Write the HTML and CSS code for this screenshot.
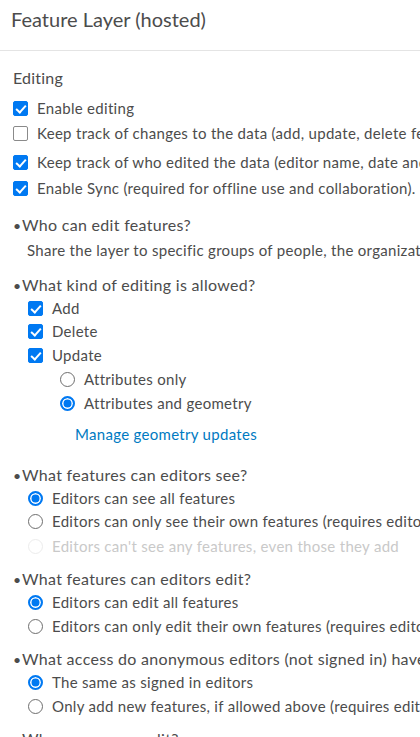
FILE: index.html
```html
<!DOCTYPE html>
<html>
<head>
<meta charset="utf-8">
<link rel="stylesheet" href="styles.css">
</head>
<body>
<div class="page">
  <header class="head">
    <h1 class="title">Feature Layer (hosted)</h1>
  </header>
  <section class="content">
    <h2 class="section">Editing</h2>
    <div class="opt row1"><span class="cb on"></span><span>Enable editing</span></div>
    <div class="opt row2"><span class="cb"></span><span>Keep track of changes to the data (add, update, delete features).</span></div>
    <div class="opt row3"><span class="cb on"></span><span>Keep track of who edited the data (editor name, date and time).</span></div>
    <div class="opt row4"><span class="cb on"></span><span>Enable Sync (required for offline use and collaboration).</span></div>

    <div class="q q1"><span class="dot">•</span>Who can edit features?</div>
    <div class="desc">Share the layer to specific groups of people, the organization, or everyone.</div>

    <div class="q q2"><span class="dot">•</span>What kind of editing is allowed?</div>
    <div class="sub">
      <div class="opt s1"><span class="cb on"></span><span>Add</span></div>
      <div class="opt s2"><span class="cb on"></span><span>Delete</span></div>
      <div class="opt s3"><span class="cb on"></span><span>Update</span></div>
      <div class="subsub">
        <div class="opt r1"><span class="rb"></span><span>Attributes only</span></div>
        <div class="opt r2"><span class="rb on"></span><span>Attributes and geometry</span></div>
        <a class="link">Manage geometry updates</a>
      </div>
    </div>

    <div class="q q3"><span class="dot">•</span>What features can editors see?</div>
    <div class="sub">
      <div class="opt s1"><span class="rb on"></span><span>Editors can see all features</span></div>
      <div class="opt s2"><span class="rb"></span><span>Editors can only see their own features (requires editor tracking)</span></div>
      <div class="opt s4 disabled"><span class="rb dis"></span><span>Editors can't see any features, even those they add</span></div>
    </div>

    <div class="q q4"><span class="dot">•</span>What features can editors edit?</div>
    <div class="sub">
      <div class="opt s1"><span class="rb on"></span><span>Editors can edit all features</span></div>
      <div class="opt s3"><span class="rb"></span><span>Editors can only edit their own features (requires editor tracking)</span></div>
    </div>

    <div class="q q5"><span class="dot">•</span>What access do anonymous editors (not signed in) have?</div>
    <div class="sub">
      <div class="opt s1"><span class="rb on"></span><span>The same as signed in editors</span></div>
      <div class="opt s3"><span class="rb"></span><span>Only add new features, if allowed above (requires editor tracking)</span></div>
    </div>

    <div class="q q6"><span class="dot">•</span>When can users edit?</div>
  </section>
</div>
</body>
</html>
```
FILE: styles.css
```css
html, body {
  margin: 0;
  padding: 0;
  background: #fff;
  overflow: hidden;
  height: 737px;
}
body {
  font-family: Lato, "Open Sans", sans-serif;
  color: #4c4c4c;
  white-space: nowrap;
}
.page {
  width: 420px;
}
.head {
  height: 51px;
  border-bottom: 1px solid #e4e4e4;
  box-sizing: border-box;
}
.title {
  margin: 0;
  padding: 7px 0 0 11px;
  font-size: 20px;
  font-weight: 400;
  line-height: 24px;
  color: #4c4c4c;
}
.content {
  padding: 16px 0 0 13px;
}
.section {
  margin: 0;
  font-size: 16px;
  font-weight: 400;
  line-height: 22px;
  letter-spacing: 0.2px;
  color: #4c4c4c;
}
.opt {
  display: flex;
  align-items: center;
  gap: 9px;
  font-size: 15px;
  line-height: 20px;
  letter-spacing: 0.3px;
}
.row1 { margin-top: 9px; }
.row2 { margin-top: 5px; }
.row3 { margin-top: 9px; }
.row4 { margin-top: 6px; }

.cb {
  flex: none;
  width: 15px;
  height: 15px;
  box-sizing: border-box;
  border: 1px solid #8a8a8a;
  border-radius: 2px;
  background: #fff;
  position: relative;
}
.cb.on {
  background: #0079f2;
  border-color: #0079f2;
}
.cb.on::after {
  content: "";
  position: absolute;
  left: 4px;
  top: 1px;
  width: 4px;
  height: 8px;
  border: solid #fff;
  border-width: 0 2px 2px 0;
  transform: rotate(42deg);
}
.rb {
  flex: none;
  width: 15px;
  height: 15px;
  box-sizing: border-box;
  border: 1px solid #6e6e6e;
  border-radius: 50%;
  background: #fff;
}
.rb.on {
  border: 2px solid #0079f2;
  box-shadow: inset 0 0 0 1.5px #fff;
  background: #0079f2;
}
.rb.dis {
  border-color: #ececec;
}
.disabled { color: #c9c9c9; }

.q {
  font-size: 16px;
  line-height: 20px;
  letter-spacing: 0.3px;
  color: #4c4c4c;
}
.dot {
  display: inline-block;
  width: 9px;
  font-size: 14px;
  letter-spacing: 0;
}
.q1 { margin-top: 17px; }
.desc {
  margin-top: 4px;
  padding-left: 14px;
  font-size: 15px;
  line-height: 20px;
  letter-spacing: 0.3px;
}
.q2 { margin-top: 15px; }
.sub {
  padding-left: 15px;
}
.s1 { margin-top: 2px; }
.s2 { margin-top: 3px; }
.s3 { margin-top: 4px; }
.s4 { margin-top: 5px; }
.subsub {
  padding-left: 32px;
  padding-top: 4px;
}
.r1 { margin-top: 0; }
.r2 { margin-top: 4px; }
.link {
  display: block;
  margin-top: 11px;
  padding-left: 15px;
  font-size: 15px;
  line-height: 20px;
  letter-spacing: 0.3px;
  color: #007ac2;
}
.q3 { margin-top: 21px; }
.q4 { margin-top: 13px; }
.q5 { margin-top: 13px; }
.q6 { margin-top: 13px; }
```
